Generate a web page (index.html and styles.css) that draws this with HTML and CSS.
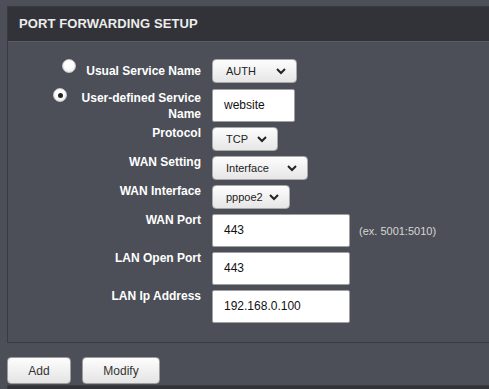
FILE: index.html
```html
<!DOCTYPE html>
<html>
<head>
    <meta charset="UTF-8">
    <meta name="viewport" content="width=device-width, initial-scale=1.0">
    <title>Port Forwarding Setup</title>
    <link rel="stylesheet" href="styles.css">
</head>
<body>
    <div class="page">
        <section class="panel">
            <h2 class="panel-title">PORT FORWARDING SETUP</h2>
            <div class="form">
                <div class="label label-first">
                    <span class="radio"></span>
                    <span class="label-text">Usual Service Name</span>
                </div>
                <div class="field">
                    <div class="select select-auth">
                        <span>AUTH</span>
                        <svg class="chevron" width="10" height="7" viewBox="0 0 10 7"><polyline points="1,1 5,5 9,1" /></svg>
                    </div>
                </div>

                <div class="label label-second">
                    <span class="radio checked"></span>
                    <span class="label-text">User-defined Service Name</span>
                </div>
                <div class="field">
                    <div class="input input-short">website</div>
                </div>

                <div class="label">Protocol</div>
                <div class="field">
                    <div class="select select-tcp">
                        <span>TCP</span>
                        <svg class="chevron" width="10" height="7" viewBox="0 0 10 7"><polyline points="1,1 5,5 9,1" /></svg>
                    </div>
                </div>

                <div class="label">WAN Setting</div>
                <div class="field">
                    <div class="select select-interface">
                        <span>Interface</span>
                        <svg class="chevron" width="10" height="7" viewBox="0 0 10 7"><polyline points="1,1 5,5 9,1" /></svg>
                    </div>
                </div>

                <div class="label">WAN Interface</div>
                <div class="field">
                    <div class="select select-pppoe">
                        <span>pppoe2</span>
                        <svg class="chevron" width="10" height="7" viewBox="0 0 10 7"><polyline points="1,1 5,5 9,1" /></svg>
                    </div>
                </div>

                <div class="label">WAN Port</div>
                <div class="field">
                    <div class="input">443</div>
                    <span class="hint">(ex. 5001:5010)</span>
                </div>

                <div class="label">LAN Open Port</div>
                <div class="field">
                    <div class="input">443</div>
                </div>

                <div class="label">LAN Ip Address</div>
                <div class="field">
                    <div class="input">192.168.0.100</div>
                </div>
            </div>
        </section>

        <div class="actions">
            <button class="btn btn-add">Add</button>
            <button class="btn btn-modify">Modify</button>
        </div>

        <section class="panel panel-next">
            <div class="panel-title"></div>
        </section>
    </div>
</body>
</html>
```

FILE: styles.css
```css
body, html {
    margin: 0;
    padding: 0;
    height: 100%;
    overflow: hidden;
    background: #4c4f57;  /* slate page */
    font-family: "Liberation Sans", Arial, sans-serif;
}

.page {
    padding: 6px 0 0 7px;
}

/* panels run on past the right edge, so no right border shows */
.panel {
    border: 1px solid #3a3b40;
    border-right: none;
}

.panel-title {
    margin: 0;
    height: 34px;
    padding-left: 11px;
    background: #323338;
    border-bottom: 1px solid #5b5d63;
    color: #ececec;
    font-size: 13px;
    font-weight: bold;
    line-height: 34px;
    letter-spacing: 0.1px;
}

.form {
    display: grid;
    grid-template-columns: 193px max-content;
    column-gap: 11px;
    row-gap: 5px;
    padding: 17px 0 19px;
}

.label {
    display: flex;
    justify-content: flex-end;
    align-items: flex-start;
    color: #fff;
    font-size: 12px;
    font-weight: bold;
    line-height: 13px;
    text-align: right;
}

.label-first .label-text {
    padding-top: 5px;
    line-height: 14px;
}

.label-second .label-text {
    max-width: 124px;
    padding-top: 2px;
    line-height: 16px;
}

.radio {
    flex: none;
    width: 12px;
    height: 12px;
    margin-right: 10px;
    border: 1px solid #c8c8c8;
    border-radius: 50%;
    background: radial-gradient(circle at 50% 35%, #ffffff 40%, #e4e4e4 100%);
    box-sizing: content-box;
    display: flex;
    justify-content: center;
    align-items: center;
}

.radio.checked::after {
    content: "";
    width: 5px;
    height: 5px;
    border-radius: 50%;
    background: #222;
}

.field {
    display: flex;
    align-items: center;
}

.select {
    height: 22px;
    padding: 0 10px 0 13px;
    border: 1px solid #a9a9a9;
    border-radius: 4px;
    background: linear-gradient(#fdfdfd, #e6e6e6);
    color: #222;
    font-size: 11px;
    display: flex;
    justify-content: space-between;
    align-items: center;
}

.select-auth { width: 60px; }
.select-tcp { width: 41px; }
.select-interface { width: 71px; }
.select-pppoe { width: 53px; }

.chevron polyline {
    fill: none;
    stroke: #222;
    stroke-width: 2;
}

.input {
    width: 125px;
    height: 31px;
    padding-left: 11px;
    border: 1px solid #a0a0a0;
    border-radius: 2px;
    background: #fff;
    color: #111;
    font-size: 12px;
    line-height: 31px;
}

.input-short {
    width: 70px;
}

.hint {
    margin-left: 9px;
    color: #d6d6d6;
    font-size: 11px;
}

.actions {
    display: flex;
    gap: 11px;
    margin-top: 14px;
    margin-bottom: 1px;
}

.btn {
    height: 27px;
    padding: 0;
    border: 1px solid #9c9c9c;
    border-radius: 4px;
    background: linear-gradient(#fdfdfd, #e4e4e4);
    color: #333;
    font-family: "Liberation Sans", Arial, sans-serif;
    font-size: 12px;
}

.btn-add { width: 64px; }
.btn-modify { width: 78px; }

/* only the top of the next panel shows at the bottom */
.panel-next {
    border-bottom: none;
}

.panel-next .panel-title {
    height: 4px;
    border-bottom: none;
}
```
